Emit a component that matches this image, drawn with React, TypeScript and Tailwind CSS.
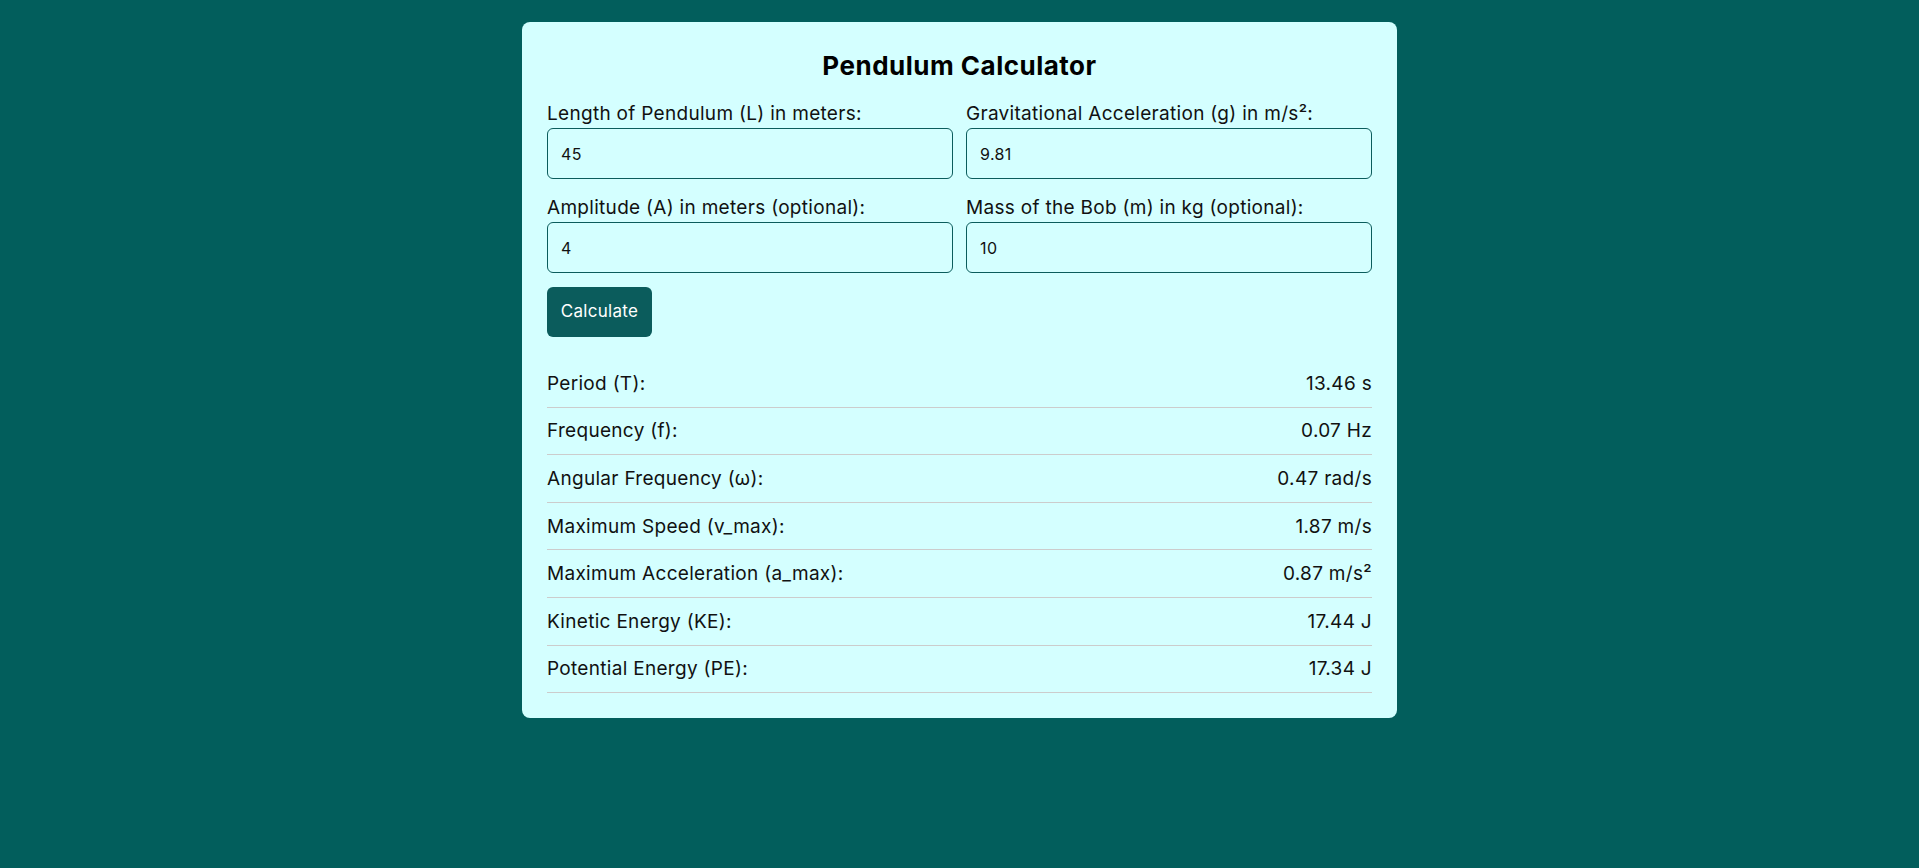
import { useState } from "react";

const results = [
  { label: "Period (T):", value: "13.46 s" },
  { label: "Frequency (f):", value: "0.07 Hz" },
  { label: "Angular Frequency (ω):", value: "0.47 rad/s" },
  { label: "Maximum Speed (v_max):", value: "1.87 m/s" },
  { label: "Maximum Acceleration (a_max):", value: "0.87 m/s²" },
  { label: "Kinetic Energy (KE):", value: "17.44 J" },
  { label: "Potential Energy (PE):", value: "17.34 J" },
];

function Field({
  label,
  value,
  onChange,
}: {
  label: string;
  value: string;
  onChange: (v: string) => void;
}) {
  return (
    <div className="flex flex-col">
      <label className="mb-px text-[19px] leading-[27px] tracking-[0.3px] text-[#111]">{label}</label>
      <input
        type="text"
        value={value}
        onChange={(e) => onChange(e.target.value)}
        className="h-[51px] w-full rounded-md border border-[#0b5c5c] bg-transparent px-[13px] text-[16px] tracking-[0.4px] text-[#111] outline-none"
      />
    </div>
  );
}

export default function App() {
  const [length, setLength] = useState("45");
  const [gravity, setGravity] = useState("9.81");
  const [amplitude, setAmplitude] = useState("4");
  const [mass, setMass] = useState("10");

  return (
    <div
      className="flex min-h-screen justify-center bg-[#025e5c] pt-[22px]"
      style={{ fontFamily: "Inter, 'Noto Sans', sans-serif" }}
    >
      <div className="h-fit w-[875px] rounded-lg bg-[#d4ffff] px-[25px] pt-[26px] pb-[25px]">
        <h1 className="mb-4 text-center text-[26px] leading-[36px] font-bold tracking-[0.5px] text-black">
          Pendulum Calculator
        </h1>

        <div className="grid grid-cols-2 gap-x-[13px] gap-y-[15px]">
          <Field label="Length of Pendulum (L) in meters:" value={length} onChange={setLength} />
          <Field label="Gravitational Acceleration (g) in m/s²:" value={gravity} onChange={setGravity} />
          <Field label="Amplitude (A) in meters (optional):" value={amplitude} onChange={setAmplitude} />
          <Field label="Mass of the Bob (m) in kg (optional):" value={mass} onChange={setMass} />
        </div>

        <button className="mt-[14px] h-[50px] w-[105px] rounded-md bg-[#0b5c5c] text-[17px] tracking-[0.3px] text-white">
          Calculate
        </button>

        <div className="mt-[23px] flex flex-col">
          {results.map((r) => (
            <div
              key={r.label}
              className="flex items-center justify-between border-b border-[#cccccc] py-[9.8px] text-[19px] leading-[27px] tracking-[0.3px] text-[#111]"
            >
              <span>{r.label}</span>
              <span>{r.value}</span>
            </div>
          ))}
        </div>
      </div>
    </div>
  );
}
